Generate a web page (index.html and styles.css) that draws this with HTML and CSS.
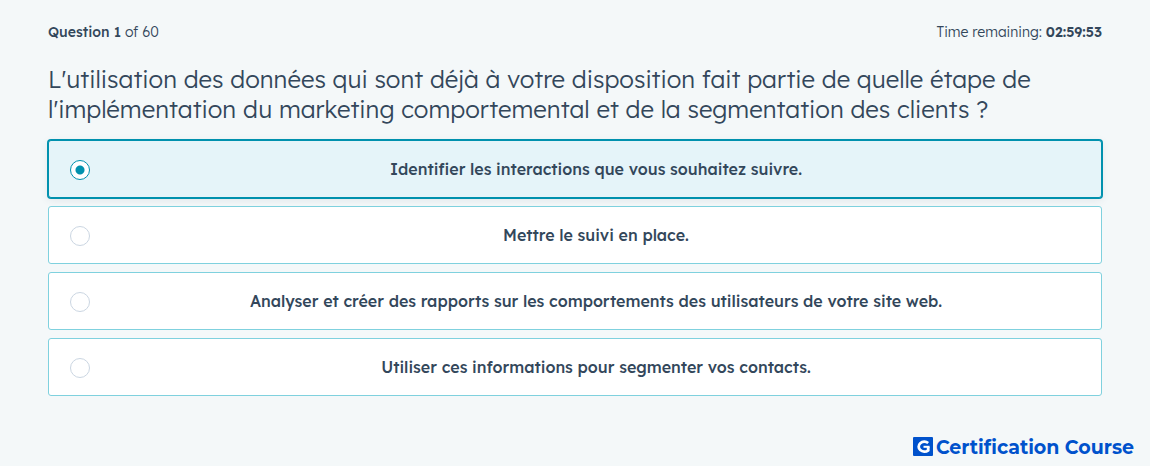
FILE: index.html
```html
<!DOCTYPE html>
<html lang="fr">
<head>
  <meta charset="UTF-8">
  <meta name="viewport" content="width=device-width, initial-scale=1">
  <title>Certification Course</title>
  <link rel="stylesheet" href="styles.css">
</head>
<body>

  <main class="quiz">
    <div class="quiz-header">
      <div><strong class="number">Question 1</strong> of 60</div>
      <div>Time remaining: <strong>02:59:53</strong></div>
    </div>

    <h1 class="question" id="question">L'utilisation des données qui sont déjà à votre disposition fait partie de quelle étape de l'implémentation du marketing comportemental et de la segmentation des clients ?</h1>

    <form class="answers" role="radiogroup" aria-labelledby="question">
      <label class="answer">
        <input type="radio" name="answer" value="1" checked>
        <span>Identifier les interactions que vous souhaitez suivre.</span>
      </label>
      <label class="answer">
        <input type="radio" name="answer" value="2">
        <span>Mettre le suivi en place.</span>
      </label>
      <label class="answer">
        <input type="radio" name="answer" value="3">
        <span>Analyser et créer des rapports sur les comportements des utilisateurs de votre site web.</span>
      </label>
      <label class="answer">
        <input type="radio" name="answer" value="4">
        <span>Utiliser ces informations pour segmenter vos contacts.</span>
      </label>
    </form>
  </main>

  <footer class="brand">
    <svg class="brand-logo" viewBox="0 0 20 19" aria-hidden="true">
      <rect width="20" height="19" rx="1" fill="#0052cc"/>
      <path d="M15.2 6A5.7 4.9 0 1 0 15.2 13.3V10" fill="none" stroke="#fff" stroke-width="2.8"/>
      <path d="M10.5 9.8H16.6" fill="none" stroke="#fff" stroke-width="2"/>
    </svg>
    <span>Certification Course</span>
  </footer>

</body>
</html>
```
FILE: styles.css
```css
* {
  box-sizing: border-box;
}

body {
  margin: 0;
  background: #f4f8f9;
  color: #33475b;
  font-family: "Lexend Deca", "Open Sans", sans-serif;
}

.quiz {
  padding: 20px 48px 0;
}

.quiz-header {
  display: flex;
  justify-content: space-between;
  font-size: 14px;
  font-weight: 300;
  line-height: 24px;
}

.quiz-header strong {
  font-weight: 600;
}

.quiz-header .number {
  font-weight: 500;
}

.question {
  margin: 20px 0 16px;
  font-size: 24px;
  font-weight: 300;
  line-height: 30px;
}

.answers {
  display: grid;
  gap: 8px;
}

.answer {
  display: flex;
  align-items: center;
  gap: 22px;
  min-height: 58px;
  padding: 0 21px;
  background: #fff;
  border: 1px solid #7fd1de;
  border-radius: 3px;
  font-size: 16px;
  font-weight: 500;
  line-height: 24px;
  cursor: pointer;
}

.answer span {
  flex: 1;
  text-align: center;
}

.answer:has(input:checked) {
  background: #e5f4f9;
  border-color: #0091ae;
  box-shadow: 0 0 0 1px #0091ae, 0 2px 8px rgba(51, 71, 91, 0.1);
}

.answer input {
  appearance: none;
  flex: none;
  width: 20px;
  height: 20px;
  margin: 2px 0 0;
  background: #fff;
  border: 1px solid #cbd6e2;
  border-radius: 50%;
  cursor: pointer;
}

.answer input:checked {
  background: radial-gradient(circle, #0091ae 4px, #fff 5px);
  border-color: #0091ae;
}

.brand {
  display: flex;
  justify-content: flex-end;
  align-items: center;
  gap: 3px;
  padding: 40px 16px 6px;
  color: #0052cc;
  font-family: Montserrat, "Open Sans", sans-serif;
  font-size: 19px;
  font-weight: 700;
  line-height: 24px;
}

.brand-logo {
  width: 20px;
  height: 19px;
  margin-bottom: 4px;
}
```
